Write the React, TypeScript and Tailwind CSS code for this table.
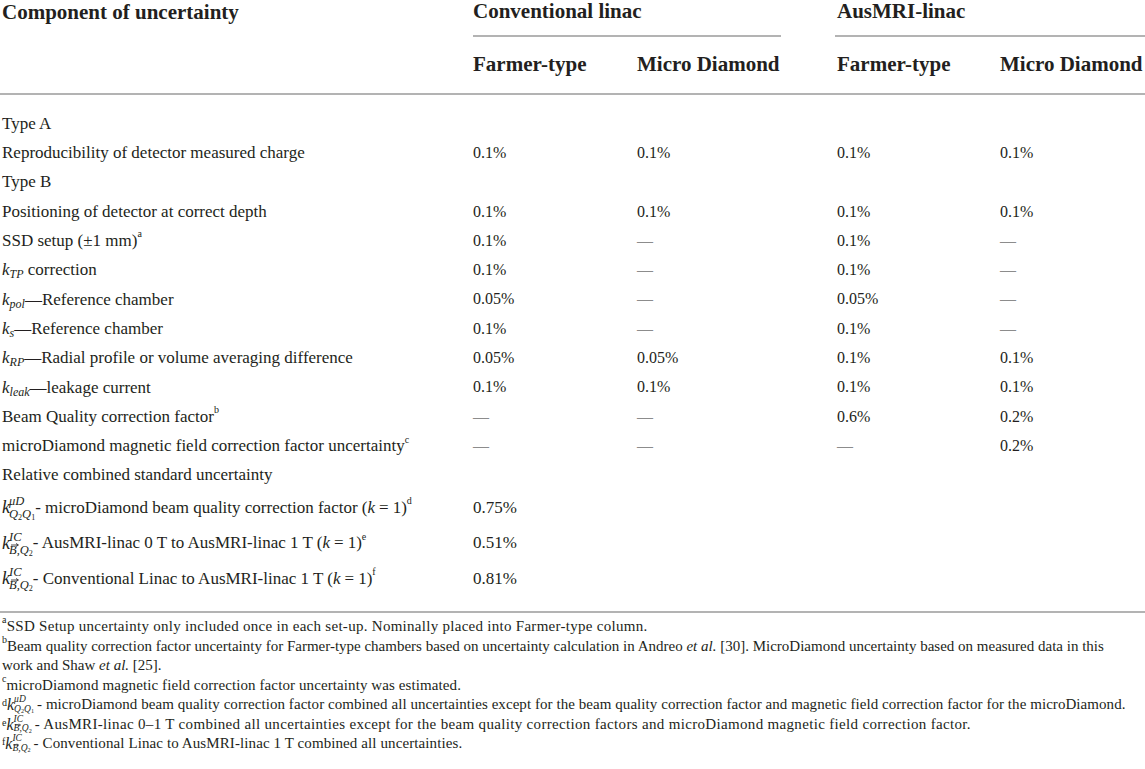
import React from "react";

const Dash = () => <span className="text-[#8c8c8c]">—</span>;

const Sc = ({ children }: { children: React.ReactNode }) => (
  <sup className="text-[10px] relative -top-[2px] align-super leading-none">{children}</sup>
);

const Bvec = ({ big }: { big?: boolean }) => (
  <span className="relative inline-block italic">
    B
    <svg
      className={big ? "absolute left-[2px] -top-[1px]" : "absolute left-[1px] -top-[1px]"}
      width={big ? 8 : 6}
      height="4"
      viewBox="0 0 8 4"
    >
      <path d="M0 2 H7 M5 0.5 L7.5 2 L5 3.5" stroke="currentColor" strokeWidth="0.8" fill="none" />
    </svg>
  </span>
);

const KSym = ({ sup, sub }: { sup: React.ReactNode; sub: React.ReactNode }) => (
  <span className="inline-flex items-center">
    <span className="italic text-[18px]">k</span>
    <span className="inline-flex flex-col text-[12.5px] leading-[13px] -ml-[1px] mt-[2px]">
      <span className="italic">{sup}</span>
      <span className="italic">{sub}</span>
    </span>
  </span>
);

const KSub = ({ sub }: { sub: string }) => (
  <span>
    <span className="italic">k</span>
    <sub className="italic text-[12px] leading-none">{sub}</sub>
  </span>
);

const Q = ({ n }: { n: string }) => (
  <span>
    Q<span className="not-italic text-[0.65em] relative top-[0.25em]">{n}</span>
  </span>
);

const Eq = () => (
  <>
    (<i>k</i>
    <span className="px-[4px]">=</span>1)
  </>
);

type Row = { label: React.ReactNode; v?: (string | null)[] };

const rows: Row[] = [
  { label: "Type A" },
  { label: "Reproducibility of detector measured charge", v: ["0.1%", "0.1%", "0.1%", "0.1%"] },
  { label: "Type B" },
  { label: "Positioning of detector at correct depth", v: ["0.1%", "0.1%", "0.1%", "0.1%"] },
  {
    label: (
      <>
        SSD setup (±1 mm)<Sc>a</Sc>
      </>
    ),
    v: ["0.1%", null, "0.1%", null],
  },
  {
    label: (
      <>
        <KSub sub="TP" /> correction
      </>
    ),
    v: ["0.1%", null, "0.1%", null],
  },
  {
    label: (
      <>
        <KSub sub="pol" />—Reference chamber
      </>
    ),
    v: ["0.05%", null, "0.05%", null],
  },
  {
    label: (
      <>
        <KSub sub="s" />—Reference chamber
      </>
    ),
    v: ["0.1%", null, "0.1%", null],
  },
  {
    label: (
      <>
        <KSub sub="RP" />—Radial profile or volume averaging difference
      </>
    ),
    v: ["0.05%", "0.05%", "0.1%", "0.1%"],
  },
  {
    label: (
      <>
        <KSub sub="leak" />—leakage current
      </>
    ),
    v: ["0.1%", "0.1%", "0.1%", "0.1%"],
  },
  {
    label: (
      <>
        Beam Quality correction factor<Sc>b</Sc>
      </>
    ),
    v: [null, null, "0.6%", "0.2%"],
  },
  {
    label: (
      <>
        microDiamond magnetic field correction factor uncertainty<Sc>c</Sc>
      </>
    ),
    v: [null, null, null, "0.2%"],
  },
  { label: "Relative combined standard uncertainty" },
];

const kRows: { label: React.ReactNode; value: string }[] = [
  {
    label: (
      <>
        <KSym
          sup="μD"
          sub={
            <>
              <Q n="2" />
              <Q n="1" />
            </>
          }
        />
        <span>
          {" "}- microDiamond beam quality correction factor <Eq />
          <Sc>d</Sc>
        </span>
      </>
    ),
    value: "0.75%",
  },
  {
    label: (
      <>
        <KSym
          sup="IC"
          sub={
            <>
              <Bvec big />,<Q n="2" />
            </>
          }
        />
        <span>
          {" "}- AusMRI-linac 0 T to AusMRI-linac 1 T <Eq />
          <Sc>e</Sc>
        </span>
      </>
    ),
    value: "0.51%",
  },
  {
    label: (
      <>
        <KSym
          sup="IC"
          sub={
            <>
              <Bvec big />,<Q n="2" />
            </>
          }
        />
        <span>
          {" "}- Conventional Linac to AusMRI-linac 1 T <Eq />
          <Sc>f</Sc>
        </span>
      </>
    ),
    value: "0.81%",
  },
];

const FnK = ({ sup, sub }: { sup: string; sub: React.ReactNode }) => (
  <span className="inline-flex items-center align-middle">
    <span className="italic text-[16px] leading-[18px]">k</span>
    <span className="inline-flex flex-col text-[9.5px] leading-[9.5px] italic">
      <span>{sup}</span>
      <span>{sub}</span>
    </span>
  </span>
);

const App = () => {
  return (
    <div
      className="w-[1145px] h-[769px] bg-white text-[#231f20] overflow-hidden"
      style={{ fontFamily: '"Liberation Serif", "Times New Roman", serif' }}
    >
      {/* header */}
      <div className="flex text-[21px] font-bold">
        <div className="w-[473px] pl-[2px] leading-[24px]">Component of uncertainty</div>
        <div className="flex flex-col">
          <div className="h-[37px] flex">
            <div className="w-[308px] border-b-2 border-[#b3b3b3] leading-[22px]">Conventional linac</div>
            <div className="w-[54px]" />
            <div className="w-[310px] border-b-2 border-[#b3b3b3] pl-[2px] leading-[22px]">AusMRI-linac</div>
          </div>
          <div className="h-[56px] flex items-center">
            <div className="w-[164px]">Farmer-type</div>
            <div className="w-[200px]">Micro Diamond</div>
            <div className="w-[163px]">Farmer-type</div>
            <div className="whitespace-nowrap">Micro Diamond</div>
          </div>
        </div>
      </div>
      <div className="h-[2px] bg-[#b3b3b3]" />

      {/* body */}
      <div className="pt-[14px] pb-[15px] text-[17px]">
        {rows.map((r, i) => (
          <div key={i} className="grid grid-cols-[471px_164px_200px_163px_1fr] h-[29.3px] items-center px-[2px]">
            <div className="whitespace-nowrap">{r.label}</div>
            {r.v &&
              r.v.map((x, j) => (
                <div key={j} className="text-[16px]">
                  {x === null ? <Dash /> : x}
                </div>
              ))}
          </div>
        ))}
        {kRows.map((r, i) => (
          <div key={i} className="grid grid-cols-[471px_164px_200px_163px_1fr] h-[35.5px] items-center px-[2px]">
            <div className="whitespace-nowrap flex items-center">{r.label}</div>
            <div className="text-[17px]">{r.value}</div>
          </div>
        ))}
      </div>
      <div className="h-[2px] bg-[#b3b3b3]" />

      {/* footnotes */}
      <div className="pt-[4px] pl-[2px] text-[15px] leading-[19.5px] whitespace-nowrap">
        <div className="tracking-[0.28px]">
          <Sc>a</Sc>SSD Setup uncertainty only included once in each set-up. Nominally placed into Farmer-type column.
        </div>
        <div>
          <Sc>b</Sc>Beam quality correction factor uncertainty for Farmer-type chambers based on uncertainty calculation in
          Andreo <i>et al.</i> [30]. MicroDiamond uncertainty based on measured data in this
          <br />
          work and Shaw <i>et al.</i> [25].
        </div>
        <div className="tracking-[0.1px]">
          <Sc>c</Sc>microDiamond magnetic field correction factor uncertainty was estimated.
        </div>
        <div className="flex items-center h-[19.5px]">
          <Sc>d</Sc>
          <FnK
            sup="μD"
            sub={
              <>
                <Q n="2" />
                <Q n="1" />
              </>
            }
          />
          <span className="ml-[3px] tracking-[0.06px]">
            - microDiamond beam quality correction factor combined all uncertainties except for the beam quality correction
            factor and magnetic field correction factor for the microDiamond.
          </span>
        </div>
        <div className="flex items-center h-[19.5px]">
          <Sc>e</Sc>
          <FnK
            sup="IC"
            sub={
              <>
                <Bvec />,<Q n="2" />
              </>
            }
          />
          <span className="ml-[3px] tracking-[0.33px]">
            - AusMRI-linac 0–1 T combined all uncertainties except for the beam quality correction factors and microDiamond
            magnetic field correction factor.
          </span>
        </div>
        <div className="flex items-center h-[19.5px]">
          <Sc>f</Sc>
          <FnK
            sup="IC"
            sub={
              <>
                <Bvec />,<Q n="2" />
              </>
            }
          />
          <span className="ml-[3px] tracking-[0.1px]">- Conventional Linac to AusMRI-linac 1 T combined all uncertainties.</span>
        </div>
      </div>
    </div>
  );
};

export default App;
